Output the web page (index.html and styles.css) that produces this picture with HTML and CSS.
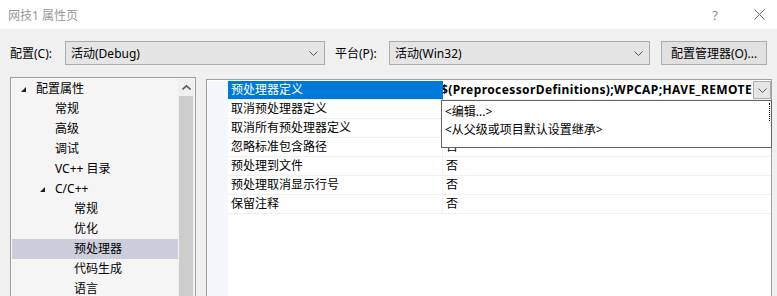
FILE: index.html
```html
<!DOCTYPE html>
<html lang="zh-CN">
<head>
    <meta charset="UTF-8">
    <title>网技1 属性页</title>
    <link rel="stylesheet" href="styles.css">
</head>
<body>
    <!-- Title Bar -->
    <div class="titlebar">
        <span class="title">网技1 属性页</span>
        <span class="help">?</span>
        <svg class="close" width="11" height="11" viewBox="0 0 11 11"><path d="M0.5 0.5 L10.5 10.5 M10.5 0.5 L0.5 10.5" stroke="#666" stroke-width="1" fill="none"/></svg>
    </div>

    <!-- Configuration Row -->
    <div class="config-row">
        <label class="cfg-label">配置(C):</label>
        <div class="combo combo-config">
            <span>活动(Debug)</span>
            <svg width="9" height="5" viewBox="0 0 9 5"><path d="M0.5 0.5 L4.5 4.5 L8.5 0.5" stroke="#555" fill="none"/></svg>
        </div>
        <label class="cfg-label platform-label">平台(P):</label>
        <div class="combo combo-platform">
            <span>活动(Win32)</span>
            <svg width="9" height="5" viewBox="0 0 9 5"><path d="M0.5 0.5 L4.5 4.5 L8.5 0.5" stroke="#555" fill="none"/></svg>
        </div>
        <button class="manager-btn">配置管理器(O)...</button>
    </div>

    <div class="panes">
        <!-- Tree -->
        <div class="tree">
            <div class="tree-items">
                <div class="node lvl0"><span class="twisty"><svg width="6" height="6" viewBox="0 0 6 6"><path d="M5 0 L5 5 L0 5 Z" fill="#1e1e1e"/></svg></span>配置属性</div>
                <div class="node lvl1"><span class="twisty"></span>常规</div>
                <div class="node lvl1"><span class="twisty"></span>高级</div>
                <div class="node lvl1"><span class="twisty"></span>调试</div>
                <div class="node lvl1"><span class="twisty"></span>VC++ 目录</div>
                <div class="node lvl1 open"><span class="twisty"><svg width="6" height="6" viewBox="0 0 6 6"><path d="M5 0 L5 5 L0 5 Z" fill="#1e1e1e"/></svg></span>C/C++</div>
                <div class="node lvl2"><span class="twisty"></span>常规</div>
                <div class="node lvl2"><span class="twisty"></span>优化</div>
                <div class="node lvl2 selected"><span class="twisty"></span>预处理器</div>
                <div class="node lvl2"><span class="twisty"></span>代码生成</div>
                <div class="node lvl2"><span class="twisty"></span>语言</div>
            </div>
            <div class="scrollbar">
                <div class="scroll-up">
                    <svg width="9" height="5" viewBox="0 0 9 5"><path d="M0.5 4.5 L4.5 0.8 L8.5 4.5" stroke="#606060" stroke-width="1.6" fill="none"/></svg>
                </div>
                <div class="thumb"></div>
            </div>
        </div>

        <!-- Property Grid -->
        <div class="props">
            <div class="prop-row active">
                <div class="gutter"></div>
                <div class="name">预处理器定义</div>
                <div class="value">
                    <span class="value-text">$(PreprocessorDefinitions);WPCAP;HAVE_REMOTE</span>
                    <span class="drop-btn"><svg width="9" height="5" viewBox="0 0 9 5"><path d="M0.5 0.5 L4.5 4.5 L8.5 0.5" stroke="#555" fill="none"/></svg></span>
                </div>
            </div>
            <div class="prop-row">
                <div class="gutter"></div>
                <div class="name">取消预处理器定义</div>
                <div class="value"></div>
            </div>
            <div class="prop-row">
                <div class="gutter"></div>
                <div class="name">取消所有预处理器定义</div>
                <div class="value"></div>
            </div>
            <div class="prop-row">
                <div class="gutter"></div>
                <div class="name">忽略标准包含路径</div>
                <div class="value">否</div>
            </div>
            <div class="prop-row">
                <div class="gutter"></div>
                <div class="name">预处理到文件</div>
                <div class="value">否</div>
            </div>
            <div class="prop-row">
                <div class="gutter"></div>
                <div class="name">预处理取消显示行号</div>
                <div class="value">否</div>
            </div>
            <div class="prop-row">
                <div class="gutter"></div>
                <div class="name">保留注释</div>
                <div class="value">否</div>
            </div>
            <div class="gutter-fill"></div>

            <!-- Dropdown list -->
            <div class="dropdown">
                <div class="drop-item focused">&lt;编辑...&gt;</div>
                <div class="drop-item">&lt;从父级或项目默认设置继承&gt;</div>
            </div>
        </div>
    </div>
</body>
</html>
```

FILE: styles.css
```css
/* General Reset */
* {
    margin: 0;
    padding: 0;
    box-sizing: border-box;
}

html, body {
    width: 777px;
    height: 296px;
    overflow: hidden;
}

body {
    background-color: #f0f0f0;
    font-family: "Noto Sans", "Noto Sans CJK SC", sans-serif;
    font-size: 12px;
    color: #000;
}

/* Title Bar */
.titlebar {
    height: 29px;
    background-color: #fff;
    display: flex;
    align-items: center;
    padding-left: 8px;
}

.title {
    color: #999;
    flex: 1;
}

.help {
    color: #888;
    font-size: 13px;
    margin-right: 36px;
}

.close {
    margin-right: 12px;
}

/* Configuration Row */
.config-row {
    display: flex;
    align-items: center;
    height: 24px;
    margin-top: 12px;
    padding-left: 10px;
}

.cfg-label {
    width: 55px;
}

.platform-label {
    margin-left: 10px;
    width: 54px;
}

.combo {
    height: 24px;
    background-color: #e5e5e5;
    border: 1px solid #acacac;
    display: flex;
    align-items: center;
    justify-content: space-between;
    padding: 0 6px 0 5px;
}

.combo-config {
    width: 260px;
}

.combo-platform {
    width: 261px;
}

.manager-btn {
    margin-left: 11px;
    width: 106px;
    height: 24px;
    background-color: #e1e1e1;
    border: 1px solid #adadad;
    font-family: inherit;
    font-size: 12px;
    color: #000;
}

/* Panes */
.panes {
    display: flex;
    align-items: flex-start;
    margin-top: 12px;
    padding-left: 10px;
    gap: 10px;
}

/* Tree */
.tree {
    width: 186px;
    height: 230px;
    border: 1px solid #a0a0a0;
    background-color: #f5f5f5;
    display: flex;
    padding: 1px 1px 0 1px;
}

.tree-items {
    width: 166px;
}

.node {
    height: 20px;
    line-height: 20px;
    display: flex;
    align-items: center;
    white-space: nowrap;
}

.node.selected {
    background-color: #cccedb;
}

.twisty {
    width: 16px;
    height: 20px;
    display: flex;
    align-items: center;
    padding-left: 1px;
    padding-top: 2px;
}

.lvl0 {
    padding-left: 8px;
}

.lvl1 {
    padding-left: 27px;
}

.lvl2 {
    padding-left: 46px;
}

.scrollbar {
    width: 16px;
    display: flex;
    flex-direction: column;
    background-color: #f0f0f0;
}

.scroll-up {
    height: 17px;
    display: flex;
    align-items: center;
    justify-content: center;
}

.thumb {
    flex: 1;
    margin: 0 1px;
    background-color: #cdcdcd;
}

/* Property Grid */
.props {
    position: relative;
    width: 566px;
    height: 228px;
    margin-top: 2px;
    border: 1px solid #a0a0a0;
    background-color: #fff;
    padding-top: 1px;
    display: flex;
    flex-direction: column;
}

.prop-row {
    display: flex;
    height: 19px;
    line-height: 18px;
}

.gutter {
    width: 21px;
    background-color: #f4f7fc;
}

.gutter-fill {
    width: 21px;
    flex: 1;
    background-color: #f4f7fc;
}

.name {
    width: 215px;
    padding-left: 3px;
    border-bottom: 1px solid #f0f0f0;
    border-right: 1px solid #f0f0f0;
    white-space: nowrap;
}

.value {
    flex: 1;
    padding-left: 3px;
    border-bottom: 1px solid #f0f0f0;
    display: flex;
    white-space: nowrap;
    overflow: hidden;
}

.active .name {
    background-color: #0078d7;
    color: #fff;
    border-right: 1px solid #0078d7;
}

.active .value {
    padding-left: 0;
}

.value-text {
    font-weight: bold;
    width: 311px;
    overflow: hidden;
    text-indent: -2px;
    letter-spacing: 0.4px;
}

.drop-btn {
    width: 18px;
    height: 18px;
    background-color: #e5e5e5;
    border: 1px solid #adadad;
    display: flex;
    align-items: center;
    justify-content: center;
}

/* Dropdown list overlay */
.dropdown {
    position: absolute;
    left: 234px;
    top: 20px;
    width: 331px;
    height: 48px;
    background-color: #fff;
    border: 1px solid #646464;
    padding-top: 2px;
}

.drop-item {
    height: 18px;
    line-height: 18px;
    padding-left: 3px;
    white-space: nowrap;
}

.drop-item.focused {
    border-right: 1px dotted #000;
    margin-right: 1px;
}
```
